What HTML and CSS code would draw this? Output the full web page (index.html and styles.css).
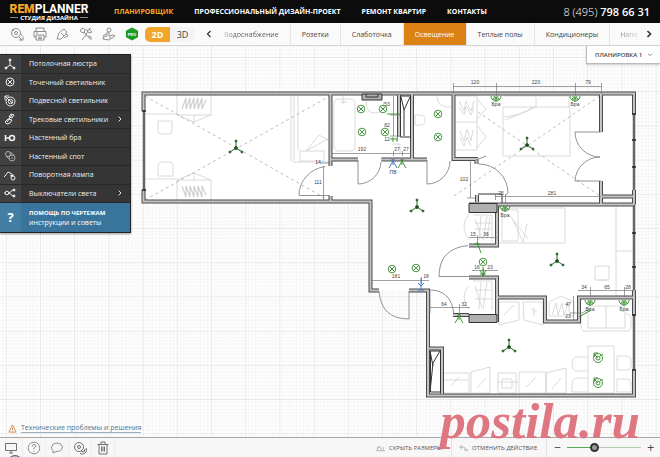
FILE: index.html
```html
<!DOCTYPE html>
<html lang="ru">
<head>
<meta charset="utf-8">
<title>Remplanner</title>
<link rel="stylesheet" href="styles.css">
</head>
<body>
<div class="app">
  <header class="header">
    <a class="logo" href="#"><span class="logo-name"><b>REM</b>PLANNER</span><span class="logo-sub">СТУДИЯ ДИЗАЙНА</span></a>
    <nav class="nav">
      <a class="current" href="#">ПЛАНИРОВЩИК</a>
      <a href="#">ПРОФЕССИОНАЛЬНЫЙ ДИЗАЙН-ПРОЕКТ</a>
      <a href="#">РЕМОНТ КВАРТИР</a>
      <a href="#">КОНТАКТЫ</a>
    </nav>
    <a class="phone" href="tel:84957986631">8 (495) <b>798 66 31</b></a>
  </header>

  <div class="toolbar">
    <div class="tools">
      <button aria-label="Измерения"><svg class="icon" viewBox="0 0 14 14"><circle cx="6" cy="6" r="4.500"/><circle cx="6" cy="6" r="1.500"/><path d="M9 13h4V9.500M9 10l3.500 3.500M2 2l2 2M10.500 7.500l2 1"/></svg></button>
      <button aria-label="Печать"><svg class="icon" viewBox="0 0 14 14"><path d="M3 4.500V1h8v3.500M3 10H1V4.500h12V10h-2M3 8h8v5H3zM5 10h4M5 11.500h4M3 6h2"/></svg></button>
      <button aria-label="Стены"><svg class="icon" viewBox="0 0 14 14"><path d="M2 9c0-3 3-5 6-7l3 3-2 2 3 1c0 3-3 1-4 3M2 9l-1 3h4l4-4M5 6l3 3"/></svg></button>
      <button aria-label="Инструменты"><svg class="icon" viewBox="0 0 14 14"><path d="M1 3l3-2 2 2-1 3-3-1zM5 5l6 7M12 1l-3 2-2 5-4 5M10 2l3 3-3 1M7 2l3 4M9 9l3 1v3"/></svg></button>
      <button aria-label="Мебель"><svg class="icon" viewBox="0 0 14 14"><circle cx="7" cy="3" r="2"/><path d="M5 5v4l-4 1v2l6 1 6-4-2-1-4 1V5M1 9l3-2M7 11l2-1"/></svg></button>
      <button aria-label="PRO"><svg class="pro" viewBox="0 0 14 14"><path d="M7 .5l6 3.300v6.400L7 13.500 1 10.200V3.800z"/><text x="7" y="8.500">PRO</text></svg></button>
    </div>
    <div class="view"><button class="on">2D</button><button>3D</button></div>
    <button class="arrow" aria-label="Назад"><svg class="chev" viewBox="0 0 6 8"><path d="M4.500 1L1.500 4l3 3"/></svg></button>
    <div class="tabs">
      <button class="fade-left">Водоснабжение</button>
      <button>Розетки</button>
      <button>Слаботочка</button>
      <button class="active">Освещение</button>
      <button>Теплые полы</button>
      <button>Кондиционеры</button>
      <button class="fade-right">Напол</button>
    </div>
    <button class="arrow next" aria-label="Вперед"><svg class="chev bold" viewBox="0 0 6 8"><path d="M1.500 1l3 3-3 3"/></svg></button>
  </div>

  <main class="workspace">
    <svg class="plan" viewBox="0 46 660 391" preserveAspectRatio="xMinYMin slice" aria-label="План квартиры">
      <defs>
        <pattern id="grid" x="40" y="57" width="34.200" height="34.200" patternUnits="userSpaceOnUse">
          <path class="minor" d="M3.400 0v34.200M6.800 0v34.200M10.300 0v34.200M13.700 0v34.200M17.100 0v34.200M20.500 0v34.200M23.900 0v34.200M27.400 0v34.200M30.800 0v34.200M0 3.400h34.200M0 6.800h34.200M0 10.300h34.200M0 13.700h34.200M0 17.100h34.200M0 20.500h34.200M0 23.900h34.200M0 27.400h34.200M0 30.800h34.200"/>
          <path class="major" d="M.5 0v34.200M0 .5h34.200"/>
        </pattern>
        <path id="walls" d="M143.500 111V93.500H634V114M143.500 190v11.500H370.500V290.500H379M409 290.500H428V395.500H634V370M634 190V204.500M634 290V315M330.500 93.500V166M330.500 196v5.500M330.500 159.500H358M381.500 159.500H427M399 95V137M412 93.500V159.500M453.500 93.500V159H478M476.500 159v5M601 93.500V132M601 181V204.500M601 196.500H634M469 204.500H634M497 204V245.500H469M469 277.500H497V322M453 315H469M497 297.500H545V321.500H579V297.500H634M428 348.500H442V394M477 202v-7M428 290v22"/>
        <g id="lamp"><path d="M0 0v-7M0 0l-6 4M0 0l6 4"/><circle cy="-7" r="1"/><circle cx="-6" cy="4" r="1"/><circle cx="6" cy="4" r="1"/><circle class="core" r="1.500"/></g>
        <g id="spot"><circle r="3.800"/><path d="M-2.500-2.500l5 5M2.500-2.500l-5 5"/></g>
        <g id="bra"><path d="M-5 0a5 5 0 0 0 10 0M-2 0a2 2 0 0 0 4 0M0 0v6M-3 3h6M-4 4l2-2M4 4L2 2"/></g>
        <g id="switch"><path d="M0-3V3M0-1l-4 7M0-1l4 7M-2-2h4"/></g>
        <g id="hangers"><path d="M0 0v20l17 7 17-7V0M17 20v7M0 20h34"/><path class="hanger" d="M5 14l4-11v11l4-11v11l4-11v11l4-11v11l4-11v11l4-9"/></g>
      </defs>
      <rect class="grid" x="0" y="46" width="1200" height="800"/>
      <path class="floor" d="M143 93H634V396H428V290H370V201H143z"/>
      <g class="furniture">
        <path d="M145 114h32M145 179h32M158 121h14v10q0 3-3 3h-8q-3 0-3-3zM158 176v-10q0-4 4-4h7q4 0 4 4v10z"/>
        <use href="#hangers" x="177" y="95"/>
        <use href="#hangers" transform="translate(177 200) scale(1 -1)"/>
        <path d="M291 96v66M294 96v66h35M298 96v55M300 151h24v10h-24zM306 151l13-16 9 5M306 151l22-12"/>
        <path d="M334 104q0-5 5-5h11q5 0 5 5v42q0 5-5 5h-11q-5 0-5-5zM343 96v8M340 102h7M366 101q0 12 9 12t9-12M391 144h9v9M415 115h6q4 0 4 5t-4 5h-6zM437 96q0 12 14 11"/>
        <path d="M456 96h21v54h-21M456 122h21M459 101l5 10 2-10 5 10 3-10M459 107l5 8 2-9 5 9 3-8M460 131l4 10 3-12 4 12 2-11M460 137l4 9 3-9 4 9M477 99l9 10-9 10M477 125l9 12-9 11"/>
        <path d="M503 107h67v49h-67zM505 96h31v11M538 96h31v11M505 120l22-9 9-4M503 117q18-1 30-10"/>
        <path d="M498 208h67v35h-67M502 210h16v31h-16zM510 216l18 23M513 220l10 22 4-18M616 206v92M616 251h17M595 266h14v14h-14zM598 280h9"/>
        <path d="M473 215h19v27M475 219l7 20M481 216l-2 24M487 216l-4 24M490 217l-3 22M475 223h17M475 229h17M469 214q-10 12 0 26M473 281h19v30M475 286l7 22M481 282l-2 27M487 282l-4 27M475 290h17M475 299h17M469 286q-10 11 0 23"/>
        <path d="M499 302h20v18l-20 5zM523 302h20v23l-19-5zM504 315l10-10M531 309l6 3M534 307v9M549 302l12-6 13 6v14h-25zM552 315l4-12 2 12 4-12 2 12 4-12 2 12"/>
        <path d="M444 373h25v20M444 380h24M444 393h26M451 386l8-9M471 372l19-5v26h-19zM477 388l9-10M498 373h18v20h-18zM502 379h10v9h-10zM497 382h21M519 372h27v21h-27zM526 387l10-10M546 373l20-5v25h-20zM552 389l9-11"/>
        <path d="M588 306h37v22h-37zM606 306v22M588 313q-7 0-7 5v8q0 6 6 5h39q5 1 5-5v-8q0-4-5-4M588 346h26v47h-26zM587 357h-9q-6 0-6 7t6 7h9M587 378h-9q-6 0-6 7v7h15M617 356h10q4 0 4 4v7q0 3-4 3h-10zM617 379h10q4 0 4 4v9h-14z"/>
      </g>
      <path class="dash" d="M145 96L330 201M145 200L330 96M454 196L600 96M478 112L600 196"/>
      <path class="opening" d="M144 111v79M634 114v76M634 204v86M634 315v55"/>
      <use class="wall-edge" href="#walls"/><use class="wall-core" href="#walls"/>
      <path class="jamb" d="M632 114h4M632 140h4M632 167h4M632 233h4M632 267h4M632 315h4M632 370h4M142 111h4M142 190h4"/>
      <path class="block" d="M469 203.500h28v9h-28zM469 314.500h28v8h-28zM362 94h20v6h-20z"/>
      <path class="shaft" d="M400.500 96h10v41h-10zM401 97l3 13M410 97l-6 13v26M430 351l3 15M440 351l-7 12-3 29M430.500 351h10v41h-10zM366 94v3h12v-3M478 194h24v9"/>
      <path class="door" d="M330 195.500h-31a31 29 0 0 1 26-29M358 160v24a23 23 0 0 0 23-22M427 160v24a23 23 0 0 0 23-23M479 164a29 29 0 0 1 29 29l-3 3M476 160l10-4M601 132h-26a25 25 0 0 0 25 25a25 25 0 0 0-25 24h26M469 276.500h-30q0-28 29-31M409 291v28q-28 0-30-28M430 290q21 0 24 24M430 291v22"/>
      <g class="dims">
        <path d="M453 86.500h148M453.500 83v11M496.500 83v13M575.500 83v13M601.500 83v11M332 153.500h79M393.500 151v5M402.500 151v5M323.500 166v34M320 163h10M393.500 96v40M390 115h11M390 136h11M470.500 160v38M467 198h8M495 196.500h106M495.500 194v6M505.500 194v10M371 280.500h58M421.500 277v7M469 237.500h28M477.500 235v10M472 270.500h26M483.500 268v8M429 307.500h41M459.500 304v10M578 290.500h56M590.500 287v10M624.500 287v10M573.500 296v25M570 313h12l9-5"/>
        <text x="475" y="84">120</text><text x="536" y="84">220</text><text x="588" y="84">79</text>
        <text x="362" y="151">192</text><text x="397" y="151">27</text><text x="406" y="151">27</text><text x="318" y="184">111</text><text x="318" y="164">14</text>
        <text x="387" y="106">53</text><text x="387" y="127">82</text><text x="387" y="141">12</text>
        <text x="464" y="181">102</text><text x="501" y="195">25</text><text x="552" y="195">281</text>
        <text x="396" y="278">181</text><text x="426" y="278">18</text><text x="473" y="236">15</text><text x="486" y="236">36</text><text x="477" y="269">16</text><text x="490" y="269">23</text>
        <text x="444" y="306">64</text><text x="464" y="306">32</text><text x="584" y="289">34</text><text x="607" y="289">65</text><text x="628" y="289">28</text><text x="568" y="306">47</text><text x="568" y="318">23</text>
        <text x="496" y="106">Бра</text><text x="575" y="106">Бра</text><text x="505" y="217">Бра</text><text x="590" y="311">Бра</text><text x="624" y="311">Бра</text><text x="393" y="174">ПВ</text>
      </g>
      <g class="lamp"><use href="#lamp" x="236" y="148"/><use href="#lamp" x="417" y="207"/><use href="#lamp" x="527" y="145"/><use href="#lamp" x="557" y="261"/><use href="#lamp" x="509" y="347"/></g>
      <g class="green">
        <use href="#spot" x="361" y="109"/><use href="#spot" x="383" y="109"/><use href="#spot" x="362" y="132"/><use href="#spot" x="385" y="132"/><use href="#spot" x="438" y="114"/><use href="#spot" x="438" y="137"/><use href="#spot" x="392" y="269"/><use href="#spot" x="416" y="268"/><use href="#spot" x="483" y="262"/>
        <use href="#bra" x="496" y="96"/><use href="#bra" x="575" y="96"/><use href="#bra" x="505" y="206"/><use href="#bra" x="590" y="300"/><use href="#bra" x="624" y="300"/>
        <use href="#switch" x="402" y="162"/><use href="#switch" x="459" y="317"/><path d="M474 244h6M477 242l4 11M483 276l-3-6M483 276l3-6M483 267v10M480 274h6M387 114h13M390 139h8M579 317l12-7M393 137v5M397 137v5"/>
        <g id="pendant"><circle cx="598" cy="358" r="4.500"/><circle cx="598" cy="358" r="2"/><path d="M594 354l4 4M594 357v-4h4M600 356l3-2"/></g>
        <use href="#pendant" y="25"/>
      </g>
      <g class="blue"><use href="#switch" x="393" y="162"/><path d="M421 278v12M418 283l3 3 3-3M418 290h6"/></g>
    </svg>

    <div class="overlay">
      <div class="menu">
        <div class="menu-list">
          <button><svg class="glyph" viewBox="0 0 12 12"><path d="M6 7V2M6 7l-4 3M6 7l4 3"/><circle class="fill" cx="6" cy="2" r="1"/><circle class="fill" cx="2" cy="10" r="1"/><circle class="fill" cx="10" cy="10" r="1"/></svg><span>Потолочная люстра</span></button>
          <button><svg class="glyph" viewBox="0 0 12 12"><circle cx="6" cy="6" r="4"/><path d="M4 4l4 4M8 4L4 8"/></svg><span>Точечный светильник</span></button>
          <button><svg class="glyph" viewBox="0 0 12 12"><circle cx="6.500" cy="6.500" r="4.500"/><circle cx="6.500" cy="6.500" r="2.200"/><path d="M1 5V1h4M1 1l6 6M7 7l2 1"/></svg><span>Подвесной светильник</span></button>
          <button><svg class="glyph" viewBox="0 0 12 12"><path d="M7 1l3 1-2 3-3-1zM4 6l4 1-2 3-3 1-2-2zM8 2L3 9"/></svg><span>Трековые светильники</span><svg class="more" viewBox="0 0 6 8"><path d="M1.500 1.500L4 4 1.500 6.500"/></svg></button>
          <button><svg class="glyph strong" viewBox="0 0 12 12"><path d="M1.500 3v6M1.500 6H6"/><circle cx="8" cy="6" r="2.500"/></svg><span>Настенный бра</span></button>
          <button><svg class="glyph dim" viewBox="0 0 12 12"><circle cx="4" cy="4" r="2.500"/><circle cx="8" cy="8" r="3"/><path d="M6 2l4 3M2 6l4 4M7 8h2"/></svg><span>Настенный спот</span></button>
          <button><svg class="glyph" viewBox="0 0 12 12"><path d="M1 7l3-4 4 2v3M0 8l2-2M6 7l4-1"/><circle cx="9" cy="9" r="2"/></svg><span>Поворотная лампа</span></button>
          <button><svg class="glyph" viewBox="0 0 12 12"><circle cx="3" cy="6" r="1.800"/><path d="M5 6l4-3M5 6l4 3M0 6h1"/><circle class="fill" cx="10" cy="3" r="1"/><circle class="fill" cx="10" cy="9" r="1"/></svg><span>Выключатели света</span><svg class="more" viewBox="0 0 6 8"><path d="M1.500 1.500L4 4 1.500 6.500"/></svg></button>
        </div>
        <a class="help" href="#"><span class="mark">?</span><span class="help-text"><b>ПОМОЩЬ ПО ЧЕРТЕЖАМ</b>инструкции и советы</span></a>
      </div>
      <div class="plan-choice"><select aria-label="Планировка"><option>ПЛАНИРОВКА 1</option></select><svg class="caret" viewBox="0 0 6 4"><path d="M1 1l2 1.500L5 1"/></svg></div>
    </div>
    <a class="issues" href="#"><svg class="warn" viewBox="0 0 10 10"><path d="M5 1l4 8H1zM5 4v2.500M5 7.300v1"/></svg><span>Технические проблемы и решения</span></a>
  </main>

  <footer class="footer">
    <div class="tools small">
      <button class="screen" aria-label="Экран"><svg class="icon dark" viewBox="0 0 14 14"><path d="M1.500 2.500h11v7h-11zM5 12h4M7 9.500V12"/></svg></button>
      <button aria-label="Справка"><svg class="icon" viewBox="0 0 14 14"><circle cx="7" cy="7" r="5.800"/><path d="M5.200 5.500q0-2 1.800-2t1.800 1.700q0 1-1.800 2v1M7 9.500v1"/></svg></button>
      <button aria-label="Сообщение"><svg class="icon" viewBox="0 0 14 14"><path d="M3 12v-2.500Q1 8 1.500 6 2.500 2 7 2t5.500 4Q12 10.500 6 10.500z"/></svg></button>
      <button aria-label="Настройки"><svg class="icon dark" viewBox="0 0 14 14"><circle cx="6" cy="6" r="4.500"/><circle cx="6" cy="6" r="1.500"/><path d="M7 12q1 1.500 3 1t3-2 0-4M8 10l3 1 1-3"/></svg></button>
      <button aria-label="Удалить"><svg class="icon dark" viewBox="0 0 14 14"><path d="M1.500 3.500h11M5 3V1h4v2M3 3.500V13h8V3.500M5.500 5.500v5M7 5.500v5M8.500 5.500v5"/></svg></button>
    </div>
    <div class="actions">
      <button class="hide"><svg class="action-icon" viewBox="0 0 10 8"><path d="M0 7h10M2 6V2M1 5l3-3 2 4M8 6V3"/></svg>СКРЫТЬ РАЗМЕРЫ</button>
      <button class="undo"><svg class="action-icon" viewBox="0 0 10 8"><path d="M3 1L1 3l2 2M1 3h4q2 0 2 3M6 6l3 1V5"/></svg>ОТМЕНИТЬ ДЕЙСТВИЕ</button>
      <div class="zoom">
        <button aria-label="Уменьшить">−</button>
        <input type="range" min="0" max="100" value="35" aria-label="Масштаб">
        <button aria-label="Увеличить">+</button>
      </div>
    </div>
  </footer>
  <div class="watermark">postila.ru</div>
</div>
</body>
</html>
```

FILE: styles.css
```css
* { box-sizing: border-box; }
body { margin: 0; font-family: "Open Sans", "Noto Sans", sans-serif; font-size: 7px; color: #444; }
button, select, input { font: inherit; color: inherit; margin: 0; padding: 0; border: 0; background: none; }
button { cursor: pointer; }
a { color: inherit; text-decoration: none; }
svg { display: block; fill: none; stroke: currentColor; }

.app { position: relative; display: flex; flex-direction: column; min-height: 100vh; overflow: hidden; background: #fff; }

.header { display: flex; align-items: center; height: 23px; padding: 0 10px; background: #0c0c0c; color: #fff; }
.logo { display: flex; flex-direction: column; align-items: center; width: 78px; }
.logo-name { font-family: Roboto, sans-serif; font-size: 12px; line-height: 12px; font-weight: 700; }
.logo-name b { color: #f5a828; }
.logo-sub { display: flex; align-items: center; gap: 2px; width: 78px; font-size: 6px; line-height: 6px; font-weight: 700; white-space: nowrap; }
.logo-sub::before, .logo-sub::after { content: ""; flex: 1; height: 1px; background: #888; }
.nav { display: flex; gap: 21px; margin-left: 26px; font-weight: 700; white-space: nowrap; }
.nav .current { color: #f5a828; }
.phone { margin-left: auto; font-size: 11px; line-height: 16px; font-weight: 300; white-space: nowrap; }
.phone b { font-weight: 600; }

.toolbar { display: flex; align-items: center; height: 23px; background: #fafafa; border-bottom: 1px solid #d4d4d4; }
.tools { display: flex; padding-left: 5px; }
.tools button { display: grid; place-items: center; width: 23px; height: 20px; }
.icon { width: 14px; height: 14px; color: #858585; stroke-width: .9; }
.icon.dark { color: #606060; }
.pro { width: 14px; height: 14px; fill: #1c9a26; stroke: none; }
.pro text { fill: #fff; font-size: 4px; font-weight: 700; text-anchor: middle; }
.view { display: flex; margin-left: 2px; font-size: 9px; line-height: 15px; }
.view button { width: 25px; height: 15px; background: #f4f4f4; border-radius: 0 5px 5px 0; }
.view .on { background: #f2a52b; color: #fff; font-weight: 700; border-radius: 5px 0 0 5px; }
.arrow { display: grid; place-items: center; width: 27px; height: 22px; }
.arrow.next { width: 22px; }
.chev { width: 6px; height: 8px; color: #333; stroke-width: 1.2; }
.chev.bold { stroke-width: 1.6; }
.tabs { display: flex; flex: 1; min-width: 0; overflow: hidden; }
.tabs button { flex: none; height: 22px; padding: 0 11px; border-right: 1px solid #e5e5e5; white-space: nowrap; }
.tabs .fade-left { padding-left: 2px; color: transparent; background: linear-gradient(90deg, #ddd, #555 14px) text; }
.tabs .fade-right { padding: 0 0 0 10px; border-right: 0; color: transparent; background: linear-gradient(90deg, #888 10px, #ddd 30px) text; }
.tabs .active { background: #dc8214; color: #fff; }

.workspace { position: relative; flex: 1; display: flex; flex-direction: column; justify-content: space-between; }
.plan { position: absolute; inset: 0; width: 100%; height: 100%; }
.overlay { position: relative; display: flex; justify-content: space-between; align-items: flex-start; }
.menu { width: 131px; margin-top: 8px; background: #333; color: #fff; border: solid #222; border-width: 1px 1px 1px 0; box-shadow: 0 1px 2px #0006; }
.menu-list { display: grid; grid-auto-rows: 1fr; height: 148px; background: linear-gradient(90deg, #414141 21px, #353535 21px); }
.menu-list button { display: flex; align-items: center; width: 100%; min-height: 0; padding: 0 7px 0 4px; border-bottom: 1px solid #282828; text-align: left; line-height: 9px; color: #eee; }
.menu-list span { flex: 1; margin-left: 13px; white-space: nowrap; }
.glyph { width: 12px; height: 12px; }
.glyph.strong { stroke-width: 1.6; }
.glyph.dim { color: #aaa; }
.glyph .fill { fill: currentColor; }
.more { width: 6px; height: 8px; color: #ddd; }
.help { display: flex; align-items: center; height: 29px; background: #38749c; line-height: 9px; }
.mark { display: grid; place-items: center; width: 21px; height: 29px; background: #447ea5; font-size: 13px; font-weight: 700; }
.help-text { display: flex; flex-direction: column; margin-left: 8px; white-space: nowrap; }
.help-text b { font-size: 6px; }
.plan-choice { display: flex; align-items: center; width: 74px; height: 18px; padding: 0 7px 0 8px; background: #fff; border: solid #bbb; border-width: 0 0 1px 1px; box-shadow: 0 1px 2px #0003; }
.plan-choice select { flex: 1; min-width: 0; appearance: none; font-size: 6px; font-weight: 600; outline: 0; }
.caret { width: 6px; height: 4px; color: #999; }
.issues { position: relative; display: flex; align-items: center; align-self: flex-start; gap: 4px; margin: 0 0 4px 8px; color: #53738b; line-height: 11px; }
.issues span { border-bottom: 1px solid #9ab0c0; line-height: 9px; }
.warn { width: 9px; height: 9px; color: #d08a48; }

.grid { fill: url(#grid); stroke: none; }
.minor { stroke: #f3f3f3; stroke-width: .7; }
.major { stroke: #e9e9e9; }
.floor { fill: #fff; stroke: none; }
.furniture { stroke: #d0d0d0; stroke-width: .8; }
.hanger { stroke-width: 1.2; }
.dash { stroke: #bdbdbd; stroke-dasharray: 3 3; }
.opening { stroke: #666; stroke-width: 2.500; }
.wall-edge { stroke: #4a4a4a; stroke-width: 4; }
.wall-core { stroke: #c4c4c4; stroke-width: 2; }
.jamb { stroke: #222; stroke-width: 1.500; }
.block { fill: #b0b0b0; stroke: #333; }
.shaft { stroke: #333; }
.door { stroke: #777; stroke-width: .8; }
.dims { stroke: #777; stroke-width: .7; }
.dims text { fill: #444; stroke: none; font-family: "Liberation Sans", sans-serif; font-size: 5px; text-anchor: middle; }
.lamp { stroke: #2c6b2c; fill: #263a26; }
.lamp .core { fill: #35a235; }
.green { stroke: #358a2c; stroke-width: .9; }
.blue { stroke: #4878c8; }

.footer { display: flex; align-items: center; justify-content: space-between; height: 20px; background: #f7f7f7; border-top: 1px solid #a8a8a8; }
.tools.small { padding-left: 0; }
.small button { height: 19px; border-right: 1px solid #eee; }
.screen { position: relative; overflow: hidden; }
.screen::after { content: ""; position: absolute; left: 7px; top: 17px; width: 14px; height: 14px; border: 1px solid #4b6b85; border-radius: 50%; background: #a9bccb; }
.actions { display: flex; align-items: center; }
.actions button { display: flex; align-items: center; gap: 4px; white-space: nowrap; }
.actions .hide, .actions .undo { height: 19px; font-size: 6px; color: #555; border-right: 1px solid #e4e4e4; }
.actions .hide { padding-right: 9px; }
.actions .undo { padding: 0 9px 0 7px; }
.action-icon { width: 9px; height: 8px; color: #999; stroke-width: .8; }
.zoom { display: flex; align-items: center; gap: 6px; padding: 0 6px 0 7px; font-size: 12px; line-height: 12px; }
.zoom input { appearance: none; width: 74px; height: 10px; background: linear-gradient(90deg, #59a852 26px, #b5ceb2 26px) center / 100% 1px no-repeat; }
.zoom input::-webkit-slider-thumb { appearance: none; width: 9px; height: 9px; border: 2px solid #333; border-radius: 50%; background: #999; }

.watermark { position: absolute; right: 20px; bottom: 8px; color: #df7782; font: italic 700 51px/56px "Liberation Serif", serif; pointer-events: none; }
```
